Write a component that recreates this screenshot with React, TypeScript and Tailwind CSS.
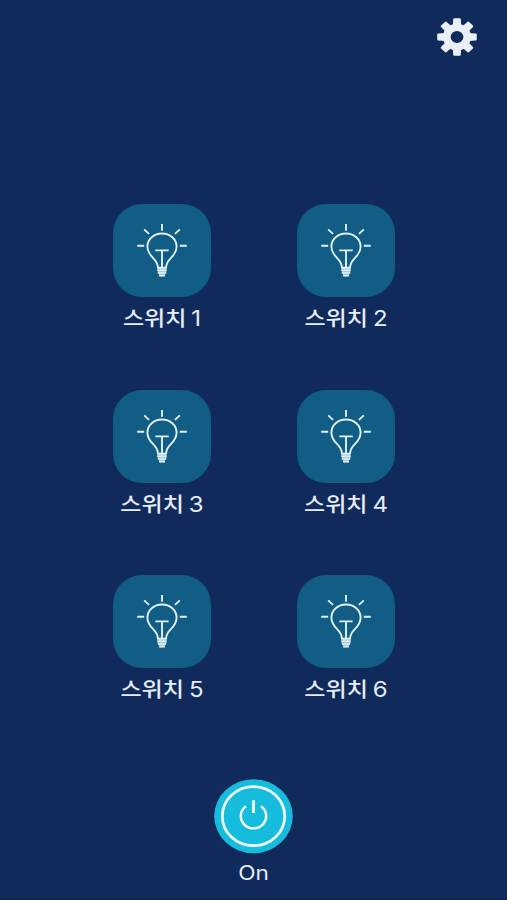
const SWITCHES = [1, 2, 3, 4, 5, 6];
const TEETH = [0, 45, 90, 135, 180, 225, 270, 315];

function GearIcon() {
  return (
    <svg className="w-10 h-[38px]" viewBox="0 0 40 40" preserveAspectRatio="none" fill="#e9eff5">
      <path fillRule="evenodd" d="M20 6a14 14 0 1 0 0 28a14 14 0 1 0 0-28zM20 13.6a6.4 6.4 0 1 1 0 12.8a6.4 6.4 0 1 1 0-12.8z" />
      {TEETH.map((angle) => (
        <path key={angle} transform={`rotate(${angle} 20 20)`} d="M15.8 8.5L16.2 1.2Q16.3 0.2 17.3 0.2H22.7Q23.7 0.2 23.8 1.2L24.2 8.5z" />
      ))}
    </svg>
  );
}

function BulbIcon() {
  return (
    <svg className="w-[98px] h-[93px]" viewBox="0 0 98 93" fill="none" stroke="#e0f1f3" strokeWidth="1.9">
      <path d="M49 20V26.8M31.2 25.4L36 29.9M66.8 25.4L62 29.9M24.2 41.7H31.2M66.8 41.7H73.8" />
      <path d="M44.8 63C44.8 54.5 34.4 53 34.4 42.7C34.4 35 41 29.5 49 29.5S63.6 35 63.6 42.7C63.6 53 53.2 54.5 53.2 63" />
      <path d="M42.3 46.4H55.7M49 46.4V63" />
      <path d="M44.5 63V67Q44.5 69.5 46 70V72.3H52V70Q53.5 69.5 53.5 67V63z" fill="#a9c8d4" stroke="none" />
      <path d="M44 63.6H54M44.3 66.3H53.7M44.8 69H53.2M46.3 71.7H51.7" strokeWidth="1.6" />
    </svg>
  );
}

function PowerIcon() {
  return (
    <svg className="w-[79px] h-[75px]" viewBox="0 0 79 75" fill="none" stroke="#effcff">
      <ellipse cx="39.5" cy="37.2" rx="39.3" ry="37" fill="#16bcdc" stroke="none" />
      <ellipse cx="39.5" cy="37.2" rx="31.2" ry="29.5" strokeWidth="2.8" />
      <path d="M32 27.3A12.7 12.2 0 1 0 47 27.3" strokeWidth="2.5" />
      <path d="M39.5 21.3V34" strokeWidth="2.9" />
    </svg>
  );
}

export default function App() {
  return (
    <div className="flex h-[900px] w-[507px] flex-col overflow-hidden border-b border-[#0b2149] bg-[#102b5b] text-[#e6edf7]">
      <header className="flex justify-end pt-[18px] pr-[30px]">
        <button aria-label="Settings">
          <GearIcon />
        </button>
      </header>

      <main className="mt-[148px] grid grid-cols-[98px_98px] justify-center gap-x-[86px]">
        {SWITCHES.map((n) => (
          <button key={n} className="flex h-[185.5px] flex-col items-center">
            <span className="h-[93px] w-[98px] shrink-0 rounded-[29px] bg-[#115d86]">
              <BulbIcon />
            </span>
            <span className="mt-1 flex scale-y-90 items-baseline gap-[5px] pl-px leading-8 whitespace-nowrap">
              <span className="font-[family-name:'Noto_Sans_CJK_KR',sans-serif] text-[23px] font-medium">스위치</span>
              <span className="font-[family-name:Inter,sans-serif] text-[24px]">{n}</span>
            </span>
          </button>
        ))}
      </main>

      <footer className="mt-[18px] flex flex-col items-center">
        <button aria-label="Power">
          <PowerIcon />
        </button>
        <span className="mt-[3px] scale-x-[1.13] font-[family-name:Inter,sans-serif] text-[20px] leading-8">On</span>
      </footer>
    </div>
  );
}
